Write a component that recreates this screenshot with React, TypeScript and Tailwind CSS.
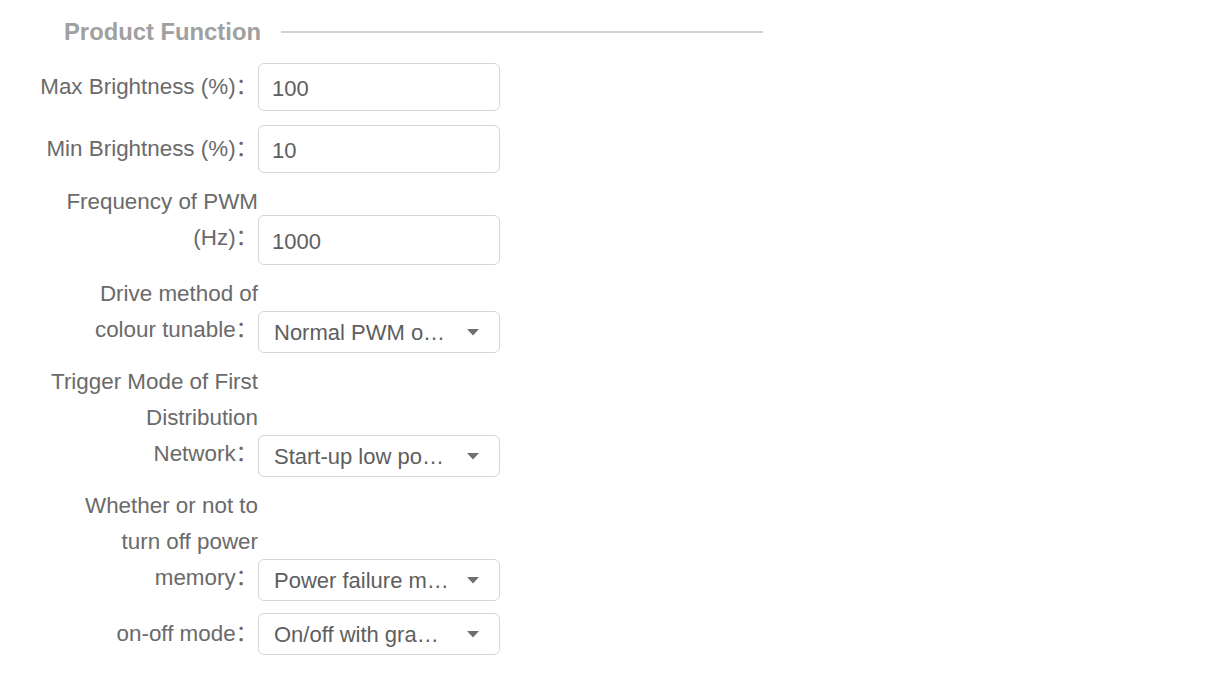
import React from "react";

const font = { fontFamily: '"Liberation Sans", "Noto Sans CJK SC", Arial, sans-serif' };

function Caret() {
  return (
    <svg width="12" height="7" viewBox="0 0 12 7" className="shrink-0">
      <path d="M0 0 L12 0 L6 6.5 Z" fill="#6f6f6f" />
    </svg>
  );
}

function Label({ lines, pb }: { lines: string[]; pb: string }) {
  return (
    <div className={`w-[218px] shrink-0 text-right leading-[36px] text-[22.4px] text-[#6a6a6a] ${pb}`}>
      {lines.map((l, i) => (
        <div key={i} className="whitespace-nowrap">
          {l}
          {i === lines.length - 1 ? "：" : ""}
        </div>
      ))}
    </div>
  );
}

function TextInput({ value, h }: { value: string; h: string }) {
  return (
    <div
      className={`w-[242px] ${h} shrink-0 rounded-[6px] border border-[#d6d6d6] bg-white pl-[13px] flex items-center pt-[3px] text-[22px] text-[#5e5e5e]`}
    >
      {value}
    </div>
  );
}

function Select({ value }: { value: string }) {
  return (
    <div className="w-[242px] h-[42px] shrink-0 rounded-[6px] border border-[#d6d6d6] bg-white pl-[15px] pr-[20px] flex items-center justify-between text-[22px] text-[#5e5e5e]">
      <span className="whitespace-nowrap">{value}</span>
      <Caret />
    </div>
  );
}

export default function App() {
  return (
    <div className="w-[1220px] h-[676px] bg-white" style={font}>
      <div className="pt-[20px] pl-[40px]">
        <div className="flex items-center pl-[24px] h-[24px]">
          <div className="text-[23.8px] font-bold text-[#a0a0a0] leading-[24px] whitespace-nowrap">Product Function</div>
          <div className="ml-[20px] w-[482px] h-[2px] bg-[#d2d2d2]" />
        </div>

        <div className="mt-[19px] flex items-end">
          <Label lines={["Max Brightness (%)"]} pb="pb-[6px]" />
          <TextInput value="100" h="h-[48px]" />
        </div>

        <div className="mt-[14px] flex items-end">
          <Label lines={["Min Brightness (%)"]} pb="pb-[6px]" />
          <TextInput value="10" h="h-[48px]" />
        </div>

        <div className="mt-[11px] flex items-end">
          <Label lines={["Frequency of PWM", "(Hz)"]} pb="pb-[9px]" />
          <TextInput value="1000" h="h-[50px]" />
        </div>

        <div className="mt-[11px] flex items-end">
          <Label lines={["Drive method of", "colour tunable"]} pb="pb-[5px]" />
          <Select value="Normal PWM o…" />
        </div>

        <div className="mt-[11px] flex items-end">
          <Label lines={["Trigger Mode of First", "Distribution", "Network"]} pb="pb-[5px]" />
          <Select value="Start-up low po…" />
        </div>

        <div className="mt-[11px] flex items-end">
          <Label lines={["Whether or not to", "turn off power", "memory"]} pb="pb-[5px]" />
          <Select value="Power failure m…" />
        </div>

        <div className="mt-[12px] flex items-end">
          <Label lines={["on-off mode"]} pb="pb-[3px]" />
          <Select value="On/off with gra…" />
        </div>
      </div>
    </div>
  );
}
